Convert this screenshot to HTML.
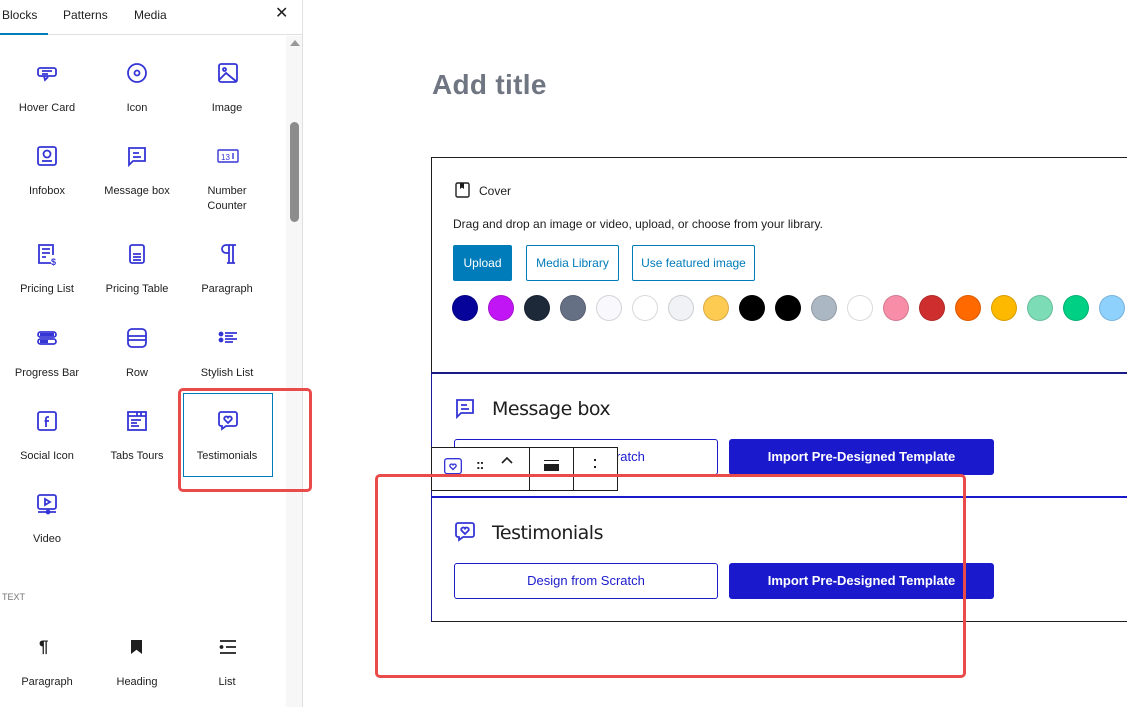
<!DOCTYPE html>
<html><head><meta charset="utf-8"><style>
*{margin:0;padding:0;box-sizing:border-box}
body{width:1127px;height:707px;overflow:hidden;background:#fff;font-family:"Liberation Sans",sans-serif;position:relative;color:#1e1e1e}
.a{position:absolute}
.lbl{position:absolute;font-size:11px;color:#1e1e1e;text-align:center;width:90px;line-height:15px}
.ic{position:absolute;width:24px;height:24px}
.ic svg{width:24px;height:24px;fill:none;stroke:#3535d6;stroke-width:1.8}
.dot{position:absolute;width:26px;height:26px;border-radius:50%;top:295px;border:1px solid rgba(0,0,0,.15)}
.bo{position:absolute;border:1px solid #1a1acc;border-radius:3px;color:#1a1acc;font-size:13px;text-align:center;line-height:33px}
.bf{position:absolute;background:#1a1acc;border-radius:3px;color:#fff;font-size:13px;font-weight:bold;text-align:center;line-height:35px}
</style></head><body>
<!-- sidebar -->
<div class="a" style="left:302px;top:0;width:1px;height:707px;background:#e0e0e0"></div>
<div class="a" style="left:0;top:34px;width:302px;height:1px;background:#e0e0e0"></div>
<div class="a" style="left:0;top:33px;width:48px;height:2px;background:#007cba"></div>
<div class="a" style="left:2px;top:8px;font-size:12px">Blocks</div>
<div class="a" style="left:63px;top:8px;font-size:12px">Patterns</div>
<div class="a" style="left:134px;top:8px;font-size:12px">Media</div>
<div class="a" style="left:275px;top:3px;font-size:16px">✕</div>
<div class="a" style="left:286px;top:36px;width:16px;height:671px;background:#f7f7f7"></div>
<div class="a" style="left:290px;top:40px;width:0;height:0;border-left:5px solid transparent;border-right:5px solid transparent;border-bottom:6px solid #999"></div>
<div class="a" style="left:290px;top:122px;width:9px;height:100px;background:#8c8c8c;border-radius:5px"></div>

<!-- row 1 -->
<div class="ic" style="left:35px;top:61px"><svg viewBox="0 0 24 24"><rect x="3" y="7" width="18" height="8" rx="2"/><path d="M7 10h10M7 13h6M9 15l1 4 3-3"/></svg></div>
<div class="lbl" style="left:2px;top:101px">Hover Card</div>
<div class="ic" style="left:125px;top:61px"><svg viewBox="0 0 24 24"><circle cx="12" cy="12" r="9"/><circle cx="12" cy="12" r="2.5"/></svg></div>
<div class="lbl" style="left:92px;top:101px">Icon</div>
<div class="ic" style="left:216px;top:61px"><svg viewBox="0 0 24 24"><rect x="3" y="3" width="18" height="18" rx="2"/><circle cx="8.5" cy="8.5" r="1.5"/><path d="M3 19l7-7 11 9"/></svg></div>
<div class="lbl" style="left:182px;top:101px">Image</div>
<!-- row 2 -->
<div class="ic" style="left:35px;top:144px"><svg viewBox="0 0 24 24"><rect x="3" y="3" width="18" height="18" rx="2"/><circle cx="12" cy="10" r="3.5"/><path d="M7 17h10"/></svg></div>
<div class="lbl" style="left:2px;top:184px">Infobox</div>
<div class="ic" style="left:125px;top:144px"><svg viewBox="0 0 24 24"><path d="M4 4h16v13H8l-4 4z"/><path d="M8 9h6M8 13h8"/></svg></div>
<div class="lbl" style="left:92px;top:184px">Message box</div>
<div class="ic" style="left:216px;top:144px"><svg viewBox="0 0 24 24" style="stroke-width:1.4"><rect x="2" y="6" width="20" height="12" rx="1"/><text x="5" y="16" font-size="8" fill="#3535d6" stroke="none" font-family="Liberation Sans">13</text><path d="M17 9v6"/></svg></div>
<div class="lbl" style="left:182px;top:184px">Number<br>Counter</div>
<!-- row 3 -->
<div class="ic" style="left:35px;top:242px"><svg viewBox="0 0 24 24"><path d="M16 21H4V3h14v10"/><path d="M7 7h8M7 11h8M7 15h4"/><text x="16" y="23" font-size="9" fill="#3535d6" stroke="none" font-weight="bold">$</text></svg></div>
<div class="lbl" style="left:2px;top:282px">Pricing List</div>
<div class="ic" style="left:125px;top:242px"><svg viewBox="0 0 24 24"><rect x="5" y="3" width="14" height="18" rx="2"/><path d="M8 12h8M8 15h8M8 18h8"/></svg></div>
<div class="lbl" style="left:92px;top:282px">Pricing Table</div>
<div class="ic" style="left:216px;top:242px"><svg viewBox="0 0 24 24"><path d="M20 3H10a4 4 0 000 8h3M13 3v18M17 3v18M11 21h8"/></svg></div>
<div class="lbl" style="left:182px;top:282px">Paragraph</div>
<!-- row 4 -->
<div class="ic" style="left:35px;top:326px"><svg viewBox="0 0 24 24"><rect x="3" y="6" width="18" height="5" rx="2.5"/><rect x="3" y="13" width="18" height="5" rx="2.5"/><path d="M5 15.5h8" stroke-width="3"/><path d="M5 8.5h14" stroke-width="3"/></svg></div>
<div class="lbl" style="left:2px;top:366px">Progress Bar</div>
<div class="ic" style="left:125px;top:326px"><svg viewBox="0 0 24 24"><rect x="3" y="3" width="18" height="18" rx="4"/><path d="M3 10h18M3 14h18"/></svg></div>
<div class="lbl" style="left:92px;top:366px">Row</div>
<div class="ic" style="left:216px;top:326px"><svg viewBox="0 0 24 24"><circle cx="5" cy="8" r="1.5" fill="#3535d6"/><circle cx="5" cy="14" r="1.5" fill="#3535d6"/><path d="M9 7h12M9 10h8M9 13h12M9 16h8"/></svg></div>
<div class="lbl" style="left:182px;top:366px">Stylish List</div>
<!-- row 5 -->
<div class="ic" style="left:35px;top:409px"><svg viewBox="0 0 24 24"><rect x="3" y="3" width="18" height="18" rx="2"/><path d="M14 8h-1.5a1.5 1.5 0 00-1.5 1.5V18M9.5 12h4.5"/></svg></div>
<div class="lbl" style="left:2px;top:449px">Social Icon</div>
<div class="ic" style="left:125px;top:409px"><svg viewBox="0 0 24 24"><rect x="3" y="3" width="18" height="18"/><path d="M3 7h18M12 3v4M16 3v4M6 11h10M6 14h6M6 17h8"/></svg></div>
<div class="lbl" style="left:92px;top:449px">Tabs Tours</div>
<div class="a" style="left:183px;top:393px;width:90px;height:84px;border:1.5px solid #007cba"></div>
<div class="a" style="left:178px;top:388px;width:134px;height:104px;border:3px solid #e94a4a;border-radius:5px"></div>
<div class="ic" style="left:216px;top:409px"><svg viewBox="0 0 24 24"><path d="M5 3h14a2 2 0 012 2v10a2 2 0 01-2 2h-9l-4 3v-3H5a2 2 0 01-2-2V5a2 2 0 012-2z"/><path d="M12 14l-3.5-3.5a2 2 0 013.5-2 2 2 0 013.5 2z"/></svg></div>
<div class="lbl" style="left:182px;top:449px">Testimonials</div>
<!-- row 6 -->
<div class="ic" style="left:35px;top:492px"><svg viewBox="0 0 24 24"><rect x="3" y="3" width="18" height="14" rx="2"/><path d="M10 7v6l5-3z"/><path d="M3 20h18"/><circle cx="13" cy="20" r="1.5"/></svg></div>
<div class="lbl" style="left:2px;top:532px">Video</div>
<div class="a" style="left:2px;top:592px;font-size:9px;color:#757575">TEXT</div>
<div class="a" style="left:39px;top:637px;font-size:17px;font-weight:bold;color:#1e1e1e">¶</div>
<div class="lbl" style="left:2px;top:675px">Paragraph</div>
<div class="a" style="left:131px;top:640px;width:11px;height:14px;background:#1e1e1e;clip-path:polygon(0 0,100% 0,100% 100%,50% 70%,0 100%)"></div>
<div class="lbl" style="left:92px;top:675px">Heading</div>
<div class="ic" style="left:216px;top:635px"><svg viewBox="0 0 24 24" style="stroke:#1e1e1e"><path d="M4 6h16M10 12h10M4 18h16"/><circle cx="5.5" cy="12" r="1" fill="#1e1e1e"/></svg></div>
<div class="lbl" style="left:182px;top:675px">List</div>

<!-- editor -->
<div class="a" style="left:432px;top:69px;font-size:28px;color:#6f7682;font-weight:bold;letter-spacing:0.3px">Add title</div>
<div class="a" style="left:431px;top:157px;width:700px;height:216px;border:1px solid #1e1e1e;border-right:none"></div>
<svg class="a" style="left:455px;top:182px" width="16" height="16" viewBox="0 0 16 16"><rect x="1" y="1" width="13" height="14" rx="1.5" fill="none" stroke="#1e1e1e" stroke-width="1.4"/><path d="M5 1v6l2-1.5 2 1.5V1z" fill="#1e1e1e"/></svg>
<div class="a" style="left:479px;top:184px;font-size:12px">Cover</div>
<div class="a" style="left:453px;top:217px;font-size:12px">Drag and drop an image or video, upload, or choose from your library.</div>
<div class="a" style="left:453px;top:245px;width:59px;height:36px;background:#007cba;color:#fff;font-size:12px;text-align:center;line-height:36px;border-radius:2px">Upload</div>
<div class="a" style="left:526px;top:245px;width:93px;height:36px;border:1px solid #007cba;color:#007cba;font-size:12px;text-align:center;line-height:34px;border-radius:2px">Media Library</div>
<div class="a" style="left:632px;top:245px;width:123px;height:36px;border:1px solid #007cba;color:#007cba;font-size:12px;text-align:center;line-height:34px;border-radius:2px">Use featured image</div>
<div class="dot" style="left:452px;background:#06039a"></div>
<div class="dot" style="left:488px;background:#c115f5"></div>
<div class="dot" style="left:524px;background:#1d2939"></div>
<div class="dot" style="left:560px;background:#667085"></div>
<div class="dot" style="left:596px;background:#f8f8fd"></div>
<div class="dot" style="left:632px;background:#fff"></div>
<div class="dot" style="left:668px;background:#f0f2f5"></div>
<div class="dot" style="left:703px;background:#fecb52"></div>
<div class="dot" style="left:739px;background:#000"></div>
<div class="dot" style="left:775px;background:#000"></div>
<div class="dot" style="left:811px;background:#abb8c3"></div>
<div class="dot" style="left:847px;background:#fff"></div>
<div class="dot" style="left:883px;background:#f78da7"></div>
<div class="dot" style="left:919px;background:#cf2e2e"></div>
<div class="dot" style="left:955px;background:#ff6900"></div>
<div class="dot" style="left:991px;background:#fcb900"></div>
<div class="dot" style="left:1027px;background:#7bdcb5"></div>
<div class="dot" style="left:1063px;background:#00d084"></div>
<div class="dot" style="left:1099px;background:#8ed1fc"></div>

<div class="a" style="left:431px;top:372px;width:700px;height:250px;border-left:1px solid #1a1a99;border-bottom:1px solid #1e1e1e"></div>
<div class="a" style="left:431px;top:372px;width:700px;height:2px;background:#1a1a88"></div>
<div class="a" style="left:431px;top:496px;width:700px;height:2px;background:#1a1acc"></div>

<div class="ic" style="left:453px;top:396px"><svg viewBox="0 0 24 24"><path d="M4 4h16v13H8l-4 4z"/><path d="M8 9h6M8 13h8"/></svg></div>
<div class="a" style="left:492px;top:398px;font-size:19px;font-family:'DejaVu Sans',sans-serif;letter-spacing:-0.5px">Message box</div>
<div class="bo" style="left:454px;top:439px;width:264px;height:36px">Design from Scratch</div>
<div class="bf" style="left:729px;top:439px;width:265px;height:36px">Import Pre-Designed Template</div>

<div class="ic" style="left:453px;top:520px"><svg viewBox="0 0 24 24"><path d="M5 3h14a2 2 0 012 2v10a2 2 0 01-2 2h-9l-4 3v-3H5a2 2 0 01-2-2V5a2 2 0 012-2z"/><path d="M12 14l-3.5-3.5a2 2 0 013.5-2 2 2 0 013.5 2z"/></svg></div>
<div class="a" style="left:492px;top:522px;font-size:19px;font-family:'DejaVu Sans',sans-serif;letter-spacing:-0.5px">Testimonials</div>
<div class="bo" style="left:454px;top:563px;width:264px;height:36px">Design from Scratch</div>
<div class="bf" style="left:729px;top:563px;width:265px;height:36px">Import Pre-Designed Template</div>

<!-- toolbar -->
<div class="a" style="left:431px;top:447px;width:187px;height:44px;background:#fff;border:1px solid #1e1e1e"></div>
<div class="a" style="left:529px;top:447px;width:1px;height:44px;background:#1e1e1e"></div>
<div class="a" style="left:573px;top:447px;width:1px;height:44px;background:#1e1e1e"></div>
<svg class="a" style="left:443px;top:457px" width="20" height="20" viewBox="0 0 24 24" fill="none" stroke="#3535d6" stroke-width="1.6"><rect x="2" y="2" width="20" height="18" rx="3"/><path d="M12 15l-3.5-3.5a2 2 0 013.5-2 2 2 0 013.5 2z"/></svg>
<div class="a" style="left:476px;top:456px;font-size:14px;color:#1e1e1e;letter-spacing:-1px;font-weight:bold">::</div>
<svg class="a" style="left:500px;top:455px" width="14" height="10" viewBox="0 0 14 10" fill="none" stroke="#1e1e1e" stroke-width="1.6"><path d="M2 8l5-5 5 5"/></svg>
<div class="a" style="left:544px;top:461px;width:15px;height:10px;background:#1e1e1e;border-top:3px solid #fff;box-shadow:0 -1px 0 #1e1e1e"></div>
<div class="a" style="left:594px;top:459px;width:2px;height:2px;background:#1e1e1e"></div>
<div class="a" style="left:594px;top:466px;width:2px;height:2px;background:#1e1e1e"></div>

<div class="a" style="left:375px;top:474px;width:591px;height:204px;border:3px solid #e94a4a;border-radius:5px"></div>
</body></html>
